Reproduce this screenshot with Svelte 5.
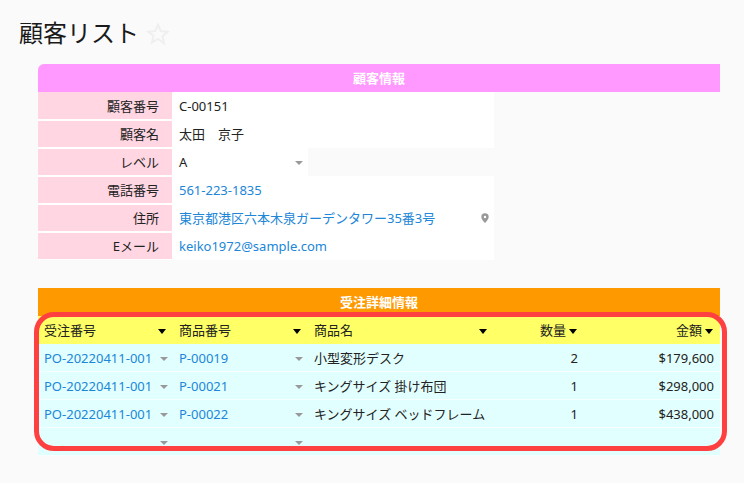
<script>
  const rows = [
    { order: 'PO-20220411-001', item: 'P-00019', name: '小型変形デスク', qty: 2, amount: '$179,600' },
    { order: 'PO-20220411-001', item: 'P-00021', name: 'キングサイズ 掛け布団', qty: 1, amount: '$298,000' },
    { order: 'PO-20220411-001', item: 'P-00022', name: 'キングサイズ ベッドフレーム', qty: 1, amount: '$438,000' },
    { order: '', item: '', name: '', qty: '', amount: '' },
  ];
</script>

<main class="page">
  <header class="title">
    <h1>顧客リスト</h1>
    <svg class="star" viewBox="0 0 24 24" width="24" height="24" aria-hidden="true">
      <path d="M12 2.800l2.800 6.300 6.800.7-5.100 4.600 1.500 6.800L12 17l-6 3.500 1.500-6.800L2.400 9.800l6.800-.7z" fill="none" stroke="#efefef" stroke-width="2" />
    </svg>
  </header>

  <section class="panel">
    <h2 class="band pink">顧客情報</h2>
    <div class="form">
      <div class="label">顧客番号</div>
      <div class="value wide">C-00151</div>
      <div class="label">顧客名</div>
      <div class="value wide">太田　京子</div>
      <div class="label">レベル</div>
      <div class="value">A<span class="caret"></span></div>
      <div class="blank"></div>
      <div class="label">電話番号</div>
      <div class="value wide link">561-223-1835</div>
      <div class="label">住所</div>
      <div class="value wide link address">
        東京都港区六本木泉ガーデンタワー35番3号
        <svg viewBox="0 0 10 12" width="8" height="10" aria-hidden="true">
          <path fill-rule="evenodd" d="M5 0a4.600 4.600 0 0 0-4.600 4.600C.4 8 5 12 5 12s4.600-4 4.600-7.400A4.600 4.600 0 0 0 5 0zm0 3.200a1.500 1.500 0 1 1 0 3 1.500 1.500 0 0 1 0-3z" fill="#999" />
        </svg>
      </div>
      <div class="label">Eメール</div>
      <div class="value wide link">keiko1972@sample.com</div>
    </div>
  </section>

  <section class="panel details">
    <h2 class="band orange">受注詳細情報</h2>
    <div class="grid head">
      <div class="th">受注番号<span class="sort"></span></div>
      <div class="th">商品番号<span class="sort"></span></div>
      <div class="th">商品名<span class="sort"></span></div>
      <div class="th num">数量<span class="sort"></span></div>
      <div class="th num">金額<span class="sort"></span></div>
    </div>
    {#each rows as r}
      <div class="grid row">
        <div class="td link">{r.order}<span class="caret"></span></div>
        <div class="td link">{r.item}<span class="caret"></span></div>
        <div class="td">{r.name}</div>
        <div class="td num">{r.qty}</div>
        <div class="td num">{r.amount}</div>
      </div>
    {/each}
    <div class="highlight"></div>
  </section>
</main>

<style>
  :global(body) {
    background: #fafafa;
  }
  .page {
    width: 744px;
    height: 483px;
    overflow: hidden;
    padding: 16px 24px 0 38px;
    box-sizing: border-box;
    font-family: "Noto Sans", "Noto Sans CJK JP", sans-serif;
    font-size: 13px;
    color: #222;
  }
  .title {
    display: flex;
    align-items: center;
    gap: 7px;
    height: 34px;
    margin-left: -19px;
    margin-bottom: 14px;
  }
  h1 {
    margin: 0;
    font-size: 24px;
    font-weight: 400;
    line-height: 34px;
    color: #1a1a1a;
  }
  .star {
    margin-top: 2px;
  }
  .band {
    margin: 0;
    height: 28px;
    line-height: 28px;
    text-align: center;
    color: #fff;
    font-size: 13px;
    font-weight: 700;
  }
  .pink {
    background: #ff99ff;
    border-radius: 6px 0 0 0;
  }
  .orange {
    background: #ff9900;
  }
  .form {
    display: grid;
    grid-template-columns: 135px 135px 186px;
    grid-auto-rows: 28px;
  }
  .label {
    background: #ffd6e2;
    border-top: 1px solid #fff;
    border-right: 1px solid #fff;
    border-bottom: 1px solid #fff;
    box-sizing: border-box;
    text-align: right;
    padding-right: 13px;
    line-height: 26px;
    color: #222;
  }
  .label:first-child {
    border-top-color: #ffd6e2;
  }
  .value {
    background: #fff;
    padding-left: 6px;
    line-height: 28px;
    position: relative;
    white-space: nowrap;
  }
  .wide {
    grid-column: span 2;
  }
  .address {
    display: flex;
    align-items: center;
    justify-content: space-between;
    padding-right: 5px;
  }
  .link {
    color: #2086d8;
  }
  .caret {
    position: absolute;
    right: 5px;
    top: 13px;
    border-left: 4px solid transparent;
    border-right: 4px solid transparent;
    border-top: 4px solid #999;
  }
  .details {
    position: relative;
    margin-top: 28px;
  }
  .grid {
    display: grid;
    grid-template-columns: 135px 135px 186px 90px 136px;
    height: 28px;
  }
  .head {
    background: #ffff66;
  }
  .row {
    background: #e2ffff;
    border-bottom: 1px solid #f6ffff;
    box-sizing: border-box;
  }
  .th,
  .td {
    position: relative;
    padding: 0 6px;
    line-height: 28px;
    white-space: nowrap;
  }
  .num {
    text-align: right;
  }
  .th.num {
    padding-right: 18px;
  }
  .sort {
    position: absolute;
    right: 7px;
    top: 13px;
    border-left: 4.5px solid transparent;
    border-right: 4.5px solid transparent;
    border-top: 5px solid #000;
  }
  .highlight {
    position: absolute;
    left: -4px;
    right: -7px;
    top: 24px;
    height: 139px;
    box-sizing: border-box;
    border: 5px solid #ff4040;
    border-radius: 20px;
    pointer-events: none;
  }
</style>
